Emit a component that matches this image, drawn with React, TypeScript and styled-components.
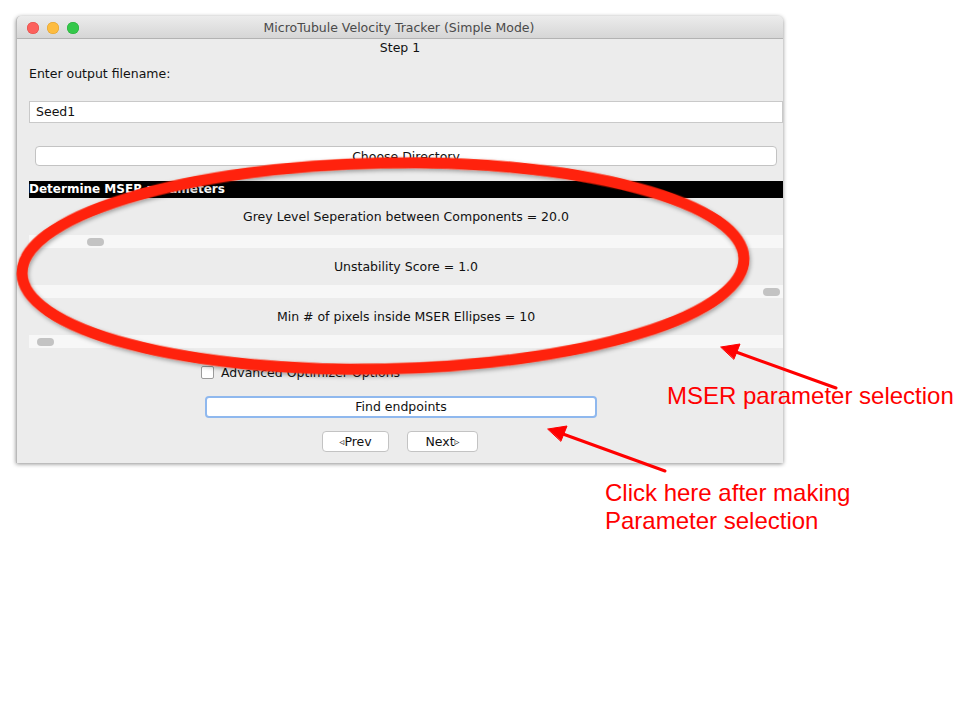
import styled, { createGlobalStyle } from "styled-components";

const GlobalStyle = createGlobalStyle`
  body {
    margin: 0;
    background: #ffffff;
  }
`;

const Stage = styled.div`
  position: relative;
  width: 960px;
  height: 720px;
  overflow: hidden;
  padding: 16px 0 0 16px;
  box-sizing: border-box;
  font-family: "DejaVu Sans", "Liberation Sans", sans-serif;
`;

const Window = styled.div`
  width: 767px;
  border-radius: 5px 5px 0 0;
  box-shadow: 0 1px 4px rgba(0, 0, 0, 0.45);
  background: #ececec;
  border-left: 1px solid #b9b9b9;
  box-sizing: border-box;
`;

const TitleBar = styled.div`
  height: 23px;
  display: grid;
  grid-template-columns: 1fr auto 1fr;
  align-items: center;
  background: linear-gradient(#ececec, #d6d6d6);
  border-bottom: 1px solid #b3b3b3;
  border-radius: 5px 5px 0 0;
  padding: 1px 10px 0;
  box-sizing: border-box;
`;

const Lights = styled.div`
  display: flex;
  gap: 8px;
`;

const Light = styled.span<{ $c: string; $b: string }>`
  width: 12px;
  height: 12px;
  border-radius: 50%;
  background: ${(p) => p.$c};
  box-shadow: inset 0 0 0 0.5px ${(p) => p.$b};
`;

const Title = styled.div`
  font-size: 12.5px;
  color: #4a4a4a;
  margin-left: -2px;
`;

const Body = styled.div`
  display: flex;
  flex-direction: column;
  font-size: 12.5px;
  color: #111;
  padding-bottom: 11px;
`;

const Step = styled.div`
  height: 17px;
  line-height: 17px;
  text-align: center;
`;

const Prompt = styled.div`
  height: 20px;
  line-height: 20px;
  margin-top: 8px;
  padding-left: 12px;
`;

const Field = styled.div`
  margin: 17px 0 0 12px;
  height: 22px;
  box-sizing: border-box;
  background: #fff;
  border: 1px solid #c9c9c9;
  line-height: 20px;
  padding-left: 6px;
`;

const DirButton = styled.div`
  margin: 23px 6px 0 18px;
  height: 20px;
  line-height: 19px;
  box-sizing: border-box;
  background: #fff;
  border: 1px solid #c3c3c3;
  border-radius: 4px;
  text-align: center;
`;

const Section = styled.div`
  margin: 15px 0 0 12px;
  height: 17px;
  line-height: 17px;
  background: #000;
  color: #fff;
  font-weight: bold;
  font-size: 12px;
`;

const ParamLabel = styled.div`
  margin-left: 12px;
  height: 37px;
  display: flex;
  align-items: center;
  justify-content: center;
`;

const Track = styled.div<{ $pos: number }>`
  margin-left: 12px;
  height: 13px;
  background: #f7f7f7;
  display: flex;
  align-items: center;
  padding: 0 2px 0 ${(p) => p.$pos}px;
`;

const Thumb = styled.span`
  width: 17px;
  height: 8px;
  border-radius: 4px;
  background: #c3c3c3;
`;

const CheckRow = styled.label`
  margin-top: 17px;
  height: 14px;
  display: flex;
  align-items: center;
  gap: 7px;
  padding-left: 184px;
`;

const Box = styled.span`
  width: 13px;
  height: 13px;
  box-sizing: border-box;
  border: 1px solid #9b9b9b;
  border-radius: 2px;
  background: #fff;
`;

const PrimaryButton = styled.div`
  margin: 17px 0 0 188px;
  width: 392px;
  height: 22px;
  box-sizing: border-box;
  border: 2px solid #8fb8ee;
  border-radius: 4px;
  background: #fff;
  text-align: center;
  line-height: 18px;
`;

const NavRow = styled.div`
  margin-top: 13px;
  display: flex;
  justify-content: center;
  gap: 18px;
`;

const NavButton = styled.div<{ $w: number }>`
  width: ${(p) => p.$w}px;
  height: 21px;
  box-sizing: border-box;
  border: 1px solid #c3c3c3;
  border-radius: 4px;
  background: #fff;
  text-align: center;
  line-height: 19px;
`;

const Tri = styled.span`
  font-size: 10px;
  color: #333;
  vertical-align: 1px;
`;

const Overlay = styled.svg`
  position: absolute;
  left: 0;
  top: 0;
  pointer-events: none;
`;

const Note = styled.div<{ $x: number; $y: number }>`
  position: absolute;
  left: ${(p) => p.$x}px;
  top: ${(p) => p.$y}px;
  color: #ff0000;
  font-family: "Liberation Sans", Arial, sans-serif;
  font-size: 24px;
  line-height: 28px;
`;

const params = [
  { label: "Grey Level Seperation between Components = 20.0", pos: 58 },
  { label: "Unstability Score = 1.0", pos: 734 },
  { label: "Min # of pixels inside MSER Ellipses = 10", pos: 8 },
];

export default function App() {
  return (
    <Stage>
      <GlobalStyle />
      <Window>
        <TitleBar>
          <Lights>
            <Light $c="#fc605c" $b="#de4a45" />
            <Light $c="#fdbc40" $b="#de9e2c" />
            <Light $c="#34c84a" $b="#27a93a" />
          </Lights>
          <Title>MicroTubule Velocity Tracker (Simple Mode)</Title>
          <span />
        </TitleBar>
        <Body>
          <Step>Step 1</Step>
          <Prompt>Enter output filename:</Prompt>
          <Field>Seed1</Field>
          <DirButton>Choose Directory</DirButton>
          <Section>Determine MSER parameters</Section>
          {params.map((p) => (
            <div key={p.label}>
              <ParamLabel>{p.label}</ParamLabel>
              <Track $pos={p.pos}>
                <Thumb />
              </Track>
            </div>
          ))}
          <CheckRow>
            <Box />
            Advanced Optimizer Options
          </CheckRow>
          <PrimaryButton>Find endpoints</PrimaryButton>
          <NavRow>
            <NavButton $w={67}>
              <Tri>◃</Tri>Prev
            </NavButton>
            <NavButton $w={71}>
              Next<Tri>▹</Tri>
            </NavButton>
          </NavRow>
        </Body>
      </Window>

      <Overlay width="960" height="720" viewBox="0 0 960 720">
        <defs>
          <filter id="sh" x="-10%" y="-20%" width="120%" height="140%">
            <feDropShadow dx="1" dy="2" stdDeviation="2" floodColor="#000" floodOpacity="0.35" />
          </filter>
        </defs>
        <ellipse
          cx="383"
          cy="266"
          rx="361"
          ry="103"
          transform="rotate(-1.2 383 266)"
          fill="none"
          stroke="#ff2108"
          strokeWidth="11"
          filter="url(#sh)"
        />
        <g fill="#ff0000" stroke="#ff0000" strokeWidth="3" strokeLinecap="round">
          <line x1="836" y1="388" x2="736" y2="352" />
          <polygon points="721,347 740,344 734,359" strokeWidth="1" />
          <line x1="665" y1="471" x2="563" y2="434" />
          <polygon points="548,429 567,426 561,441" strokeWidth="1" />
        </g>
      </Overlay>
      <Note $x={667} $y={382}>MSER parameter selection</Note>
      <Note $x={605} $y={479}>
        Click here after making
        <br />
        Parameter selection
      </Note>
    </Stage>
  );
}
